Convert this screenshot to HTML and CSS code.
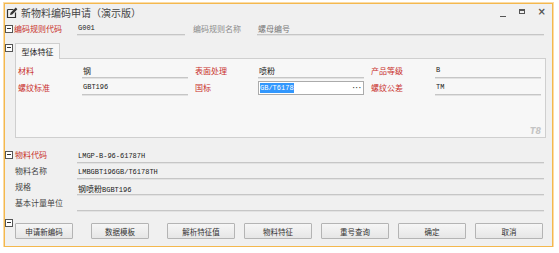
FILE: index.html
```html
<!DOCTYPE html>
<html lang="zh-CN">
<head>
  <meta charset="UTF-8">
  <title>新物料编码申请</title>
  <link rel="stylesheet" href="styles.css">
</head>
<body>
  <div class="window">
    <div class="titlebar">
      <svg class="title-icon" width="12" height="12" viewBox="0 0 12 12">
        <path d="M1.5 2.5h6M1.5 2.5v8h8v-5" fill="none" stroke="#333" stroke-width="1.2"/>
        <path d="M4 8l0.6-2.2L9.8 0.6l1.6 1.6L6.2 7.4z" fill="#333"/>
      </svg>
      <span class="title">新物料编码申请（演示版）</span>
      <div class="controls">
        <span class="ctl-min"></span>
        <span class="ctl-max"></span>
        <span class="ctl-close">×</span>
      </div>
    </div>

    <div class="row head-row">
      <i class="fold"></i>
      <span class="label red lbl-a">编码规则代码</span>
      <span class="field mono f-code">G001</span>
      <span class="label gray lbl-b">编码规则名称</span>
      <span class="field f-name">螺母编号</span>
    </div>

    <div class="tab-row">
      <i class="fold"></i>
      <div class="tab">型体特征</div>
    </div>

    <div class="group">
      <div class="grid">
        <span class="label red">材料</span>
        <span class="field cjk">钢</span>
        <span class="label red pad">表面处理</span>
        <span class="field cjk">喷粉</span>
        <span class="label red pad">产品等级</span>
        <span class="field mono">B</span>

        <span class="label red">螺纹标准</span>
        <span class="field mono">GBT196</span>
        <span class="label red pad">国标</span>
        <span class="input mono"><span class="sel">GB/T6178</span><span class="dots">···</span></span>
        <span class="label red pad">螺纹公差</span>
        <span class="field mono">TM</span>
      </div>
      <span class="watermark">T8</span>
    </div>

    <div class="section">
      <div class="row item">
        <i class="fold"></i>
        <span class="label red">物料代码</span>
        <span class="field mono">LMGP-B-96-61787H</span>
      </div>
      <div class="row item">
        <i class="spacer"></i>
        <span class="label dark">物料名称</span>
        <span class="field mono">LMBGBT196GB/T6178TH</span>
      </div>
      <div class="row item">
        <i class="spacer"></i>
        <span class="label dark">规格</span>
        <span class="field mono"><span class="cjk">钢喷粉</span>BGBT196</span>
      </div>
      <div class="row item">
        <i class="spacer"></i>
        <span class="label dark">基本计量单位</span>
        <span class="field mono"></span>
      </div>
    </div>

    <div class="btn-row">
      <i class="fold"></i>
      <div class="buttons">
        <button class="btn w-s">申请新编码</button>
        <button class="btn w-s">数据模板</button>
        <button class="btn">解析特征值</button>
        <button class="btn">物料特征</button>
        <button class="btn">重号查询</button>
        <button class="btn">确定</button>
        <button class="btn">取消</button>
      </div>
    </div>
  </div>
</body>
</html>
```

FILE: styles.css
```css
* {
  box-sizing: border-box;
  margin: 0;
  padding: 0;
}
body {
  background: #fff;
  font-family: "Noto Sans CJK SC", "Noto Sans", sans-serif;
  color: #333;
}
.window {
  margin: 3px 0 0 4px;
  width: 549px;
  height: 244px;
  background: #f0f0f0;
  border: 1px solid #f4b84e;
  box-shadow: 0 0 0 1px #fbdca6;
}

/* title bar */
.titlebar {
  height: 17px;
  display: flex;
  align-items: center;
}
.title-icon {
  margin-left: 1px;
  margin-top: 1px;
}
.title {
  margin-left: 3px;
  font-size: 10px;
  color: #444;
  line-height: 17px;
}
.controls {
  margin-left: auto;
  margin-right: 6px;
  display: flex;
  align-items: center;
  gap: 13px;
  height: 17px;
}
.ctl-min {
  width: 6px;
  height: 1px;
  background: #555;
  margin-top: 7px;
}
.ctl-max {
  width: 6px;
  height: 5px;
  border: 1px solid #555;
  border-top-width: 2px;
  margin-top: -2px;
}
.ctl-close {
  font-family: "DejaVu Sans", sans-serif;
  font-size: 10px;
  font-weight: bold;
  color: #555;
  line-height: 10px;
  margin-top: -2px;
}

/* shared */
.row {
  display: flex;
  align-items: center;
}
.fold {
  display: block;
  width: 8px;
  height: 8px;
  border: 1px solid #555;
  background: #fff;
  margin-right: 1px;
  flex: none;
  position: relative;
}
.fold::after {
  content: "";
  position: absolute;
  left: 1px;
  right: 1px;
  top: 2px;
  height: 1px;
  background: #333;
}
.spacer {
  width: 9px;
  flex: none;
}
.label {
  font-size: 8px;
  line-height: 12px;
  white-space: nowrap;
  flex: none;
}
.red { color: #c9302c; }
.gray { color: #8c8c8c; }
.dark { color: #444; }
.field {
  display: block;
  height: 12px;
  line-height: 11px;
  padding-left: 1px;
  border-bottom: 1px solid #c6c6c6;
  box-shadow: 0 1px 0 #e2e2e2;
  font-size: 8px;
  color: #222;
  white-space: nowrap;
}
.mono {
  font-family: "Liberation Mono", "DejaVu Sans Mono", monospace;
  font-size: 7px;
}
.cjk {
  font-family: "Noto Sans CJK SC", sans-serif;
  font-size: 8px;
}

/* first row */
.head-row {
  height: 14px;
  margin-top: 1px;
}
.lbl-a { width: 63px; }
.f-code { width: 108px; }
.lbl-b { width: 72px; padding-left: 8px; }
.f-name { width: 287px; color: #777; }

/* tab */
.tab-row {
  height: 23px;
  display: flex;
  align-items: flex-end;
  margin-bottom: -1px;
}
.tab-row .fold {
  margin-bottom: 7px;
}
.tab {
  position: relative;
  z-index: 1;
  margin-left: 1px;
  width: 45px;
  height: 16px;
  background: #f7f7f7;
  border: 1px solid #cfcfcf;
  border-bottom: none;
  font-size: 8px;
  line-height: 15px;
  text-align: center;
  color: #222;
}

/* group box */
.group {
  position: relative;
  margin-left: 10px;
  width: 531px;
  height: 80px;
  border: 1px solid #cfcfcf;
  background: #f7f7f7;
  padding: 5px 0 0 2px;
}
.grid {
  display: grid;
  grid-template-columns: 64px 106px 70px 106px 71px 106px;
  grid-auto-rows: 14px;
  row-gap: 3px;
  align-items: center;
}
.pad { padding-left: 7px; }
.grid .field { height: 13px; }
.input {
  display: flex;
  align-items: center;
  height: 14px;
  background: #fff;
  border: 1px solid #ababab;
  padding-left: 1px;
  color: #222;
}
.sel {
  background: #3297fd;
  color: #fff;
  line-height: 10px;
}
.dots {
  margin-left: auto;
  margin-right: 2px;
  font-size: 7px;
  letter-spacing: -1px;
  font-weight: bold;
  color: #333;
}
.watermark {
  position: absolute;
  right: 4px;
  bottom: 1px;
  font-family: "DejaVu Sans", sans-serif;
  font-size: 8px;
  font-style: italic;
  font-weight: bold;
  color: #c4c4c4;
}

/* item section */
.section {
  margin-top: 9px;
}
.item {
  height: 16px;
}
.item .label {
  width: 63px;
  padding-left: 1px;
}
.item .field {
  width: 467px;
  margin-top: 3px;
}

/* buttons */
.btn-row {
  display: flex;
  align-items: flex-start;
  margin-top: 8px;
}
.buttons {
  display: flex;
  margin-top: 4px;
  margin-left: 1px;
}
.btn {
  width: 68px;
  height: 16px;
  margin-right: 9px;
  background: linear-gradient(#f6f6f6, #e6e6e6);
  border: 1px solid #b4b4b4;
  border-radius: 1px;
  font-family: "Noto Sans CJK SC", sans-serif;
  font-size: 7.5px;
  color: #333;
}
.btn.w-s {
  width: 58px;
  margin-right: 18px;
}
.btn:last-child { margin-right: 0; }
```
